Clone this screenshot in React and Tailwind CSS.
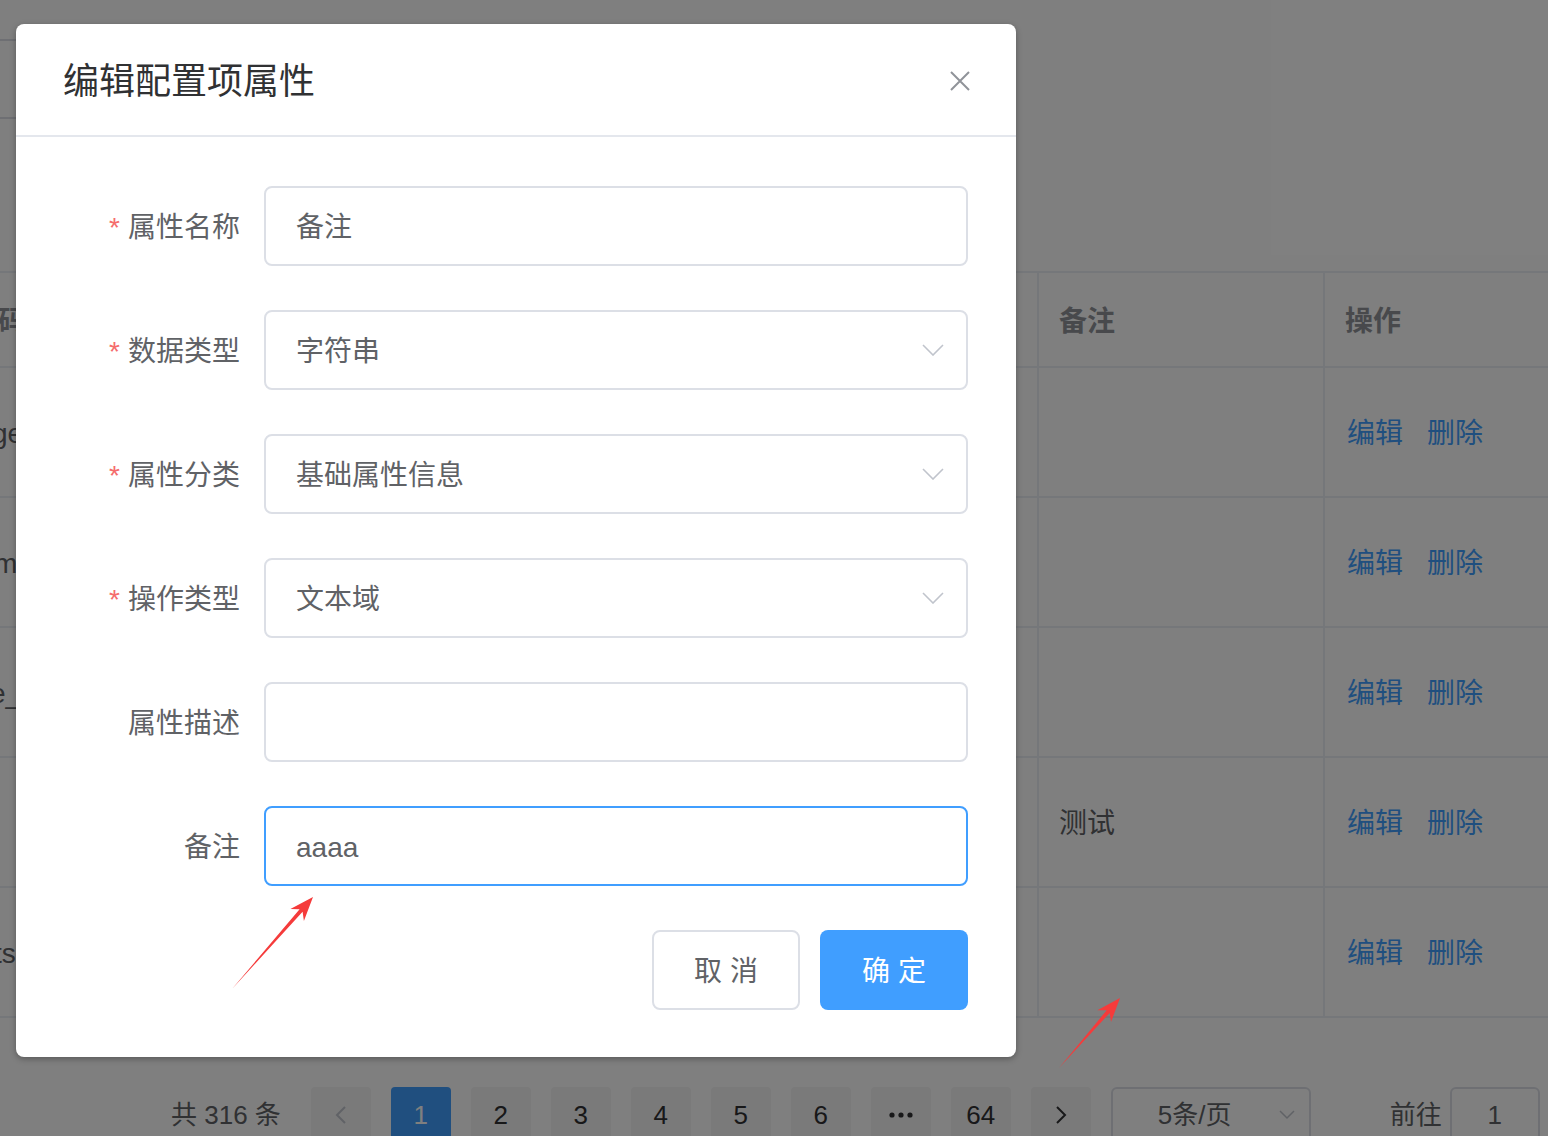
import React from "react";

const rows = [
  { left: "ge", leftShift: "-ml-[8px]", remark: "" },
  { left: "m", leftShift: "-ml-[6px]", remark: "" },
  { left: "e_", leftShift: "-ml-[10px]", remark: "" },
  { left: "", leftShift: "", remark: "测试" },
  { left: "ts", leftShift: "-ml-[6px]", remark: "" },
];

const fields = [
  { label: "属性名称", value: "备注", required: true, kind: "input" },
  { label: "数据类型", value: "字符串", required: true, kind: "select" },
  { label: "属性分类", value: "基础属性信息", required: true, kind: "select" },
  { label: "操作类型", value: "文本域", required: true, kind: "select" },
  { label: "属性描述", value: "", required: false, kind: "input" },
  { label: "备注", value: "aaaa", required: false, kind: "focus" },
];

const pages = ["1", "2", "3", "4", "5", "6", "more", "64"];

const ChevronDown = () => (
  <svg width="22" height="12" viewBox="0 0 22 12">
    <path d="M1 1 L11 11 L21 1" fill="none" stroke="#c0c4cc" strokeWidth="1.6" />
  </svg>
);

const Chevron = ({ dir, color }) => (
  <svg width="12" height="18" viewBox="0 0 12 18">
    <path
      d={dir === "left" ? "M10 1 L2 9 L10 17" : "M2 1 L10 9 L2 17"}
      fill="none"
      stroke={color}
      strokeWidth="2"
    />
  </svg>
);

const Background = () => (
  <div className="flex flex-col">
    <div className="-ml-[10px] mt-[39px] h-[80px] w-[600px] rounded-[8px] border-2 border-[#dcdfe6]" />

    <div className="mt-[152px] border-t-2 border-[#ebeef5]">
      <div className="grid h-[95px] grid-cols-[1039px_286px_1fr] border-b-2 border-[#ebeef5] text-[28px] font-bold text-[#909399]">
        <div className="flex items-center overflow-hidden border-r-2 border-[#ebeef5] pt-[4px]">
          <span className="-ml-[30px] whitespace-nowrap">编码</span>
        </div>
        <div className="flex items-center border-r-2 border-[#ebeef5] pl-[20px] pt-[4px]">备注</div>
        <div className="flex items-center pl-[20px] pt-[4px]">操作</div>
      </div>
      {rows.map((row, i) => (
        <div
          key={i}
          className="grid h-[130px] grid-cols-[1039px_286px_1fr] border-b-2 border-[#ebeef5] text-[28px] text-[#606266]"
        >
          <div className="flex items-center overflow-hidden border-r-2 border-[#ebeef5] pt-[4px]">
            <span className={`whitespace-nowrap ${row.leftShift}`}>{row.left}</span>
          </div>
          <div className="flex items-center border-r-2 border-[#ebeef5] pl-[20px] pt-[4px]">{row.remark}</div>
          <div className="flex items-center gap-[24px] pl-[22px] pt-[4px] text-[#409eff]">
            <span>编辑</span>
            <span>删除</span>
          </div>
        </div>
      ))}
    </div>

    <div className="mt-[69px] flex h-[56px] items-center pl-[171px] text-[26px] text-[#606266]">
      <span className="mr-[30px] whitespace-nowrap">共 316 条</span>
      <div className="mr-[20px] flex h-[56px] w-[60px] items-center justify-center rounded-[4px] bg-[#f4f4f5]">
        <Chevron dir="left" color="#c0c4cc" />
      </div>
      {pages.map((p) => (
        <div
          key={p}
          className={`mr-[20px] flex h-[56px] w-[60px] items-center justify-center rounded-[4px] ${
            p === "1" ? "bg-[#409eff] text-white" : "bg-[#f4f4f5] text-[#303133]"
          }`}
        >
          {p === "more" ? (
            <svg width="24" height="6" viewBox="0 0 24 6">
              <circle cx="3" cy="3" r="2.6" fill="#303133" />
              <circle cx="12" cy="3" r="2.6" fill="#303133" />
              <circle cx="21" cy="3" r="2.6" fill="#303133" />
            </svg>
          ) : (
            p
          )}
        </div>
      ))}
      <div className="mr-[20px] flex h-[56px] w-[60px] items-center justify-center rounded-[4px] bg-[#f4f4f5]">
        <Chevron dir="right" color="#303133" />
      </div>
      <div className="flex h-[56px] w-[200px] items-center rounded-[6px] border-2 border-[#dcdfe6] pl-[45px] pr-[14px]">
        <span className="flex-1 whitespace-nowrap">5条/页</span>
        <svg width="16" height="10" viewBox="0 0 16 10">
          <path d="M1 1 L8 8 L15 1" fill="none" stroke="#c0c4cc" strokeWidth="1.5" />
        </svg>
      </div>
      <span className="ml-[79px] whitespace-nowrap">前往</span>
      <div className="ml-[8px] flex h-[56px] w-[90px] items-center justify-center rounded-[6px] border-2 border-[#dcdfe6]">
        1
      </div>
    </div>
  </div>
);

const Field = ({ field }) => (
  <div className="mb-[44px] flex h-[80px] items-center">
    <div className="flex w-[248px] items-center justify-end pr-[24px] pt-[4px] text-[28px] text-[#606266]">
      {field.required ? <span className="mr-[8px] text-[#f56c6c]">*</span> : null}
      <span className="whitespace-nowrap">{field.label}</span>
    </div>
    <div
      className={`flex h-[80px] w-[704px] items-center justify-between rounded-[8px] border-2 pl-[30px] pr-[22px] text-[28px] text-[#606266] ${
        field.kind === "focus" ? "border-[#409eff]" : "border-[#dcdfe6]"
      }`}
    >
      <span className="whitespace-nowrap pt-[4px]">{field.value}</span>
      {field.kind === "select" ? <ChevronDown /> : null}
    </div>
  </div>
);

const Dialog = () => (
  <div className="w-[1000px] rounded-[8px] bg-white shadow-[0_2px_6px_rgba(0,0,0,0.3)]">
    <div className="flex h-[113px] items-center justify-between border-b-2 border-[#e4e7ed] pl-[47px] pr-[46px]">
      <h2 className="pt-[4px] text-[36px] leading-[48px] text-[#303133]">编辑配置项属性</h2>
      <svg width="20" height="20" viewBox="0 0 20 20" className="mt-[2px]">
        <path d="M1 1 L19 19 M19 1 L1 19" stroke="#909399" strokeWidth="2" />
      </svg>
    </div>

    <div className="pt-[49px]">
      {fields.map((f) => (
        <Field key={f.label} field={f} />
      ))}
    </div>

    <div className="flex justify-end gap-[20px] pb-[47px] pr-[48px]">
      <button
        type="button"
        className="flex h-[80px] w-[148px] items-center justify-center rounded-[8px] border-2 border-[#dcdfe6] bg-white pt-[3px] text-[28px] text-[#606266]"
      >
        取 消
      </button>
      <button
        type="button"
        className="flex h-[80px] w-[148px] items-center justify-center rounded-[8px] bg-[#409eff] pt-[3px] text-[28px] text-white"
      >
        确 定
      </button>
    </div>
  </div>
);

export default function App() {
  return (
    <div className="relative h-[1136px] w-full overflow-hidden bg-white font-['Liberation_Sans','Noto_Sans_CJK_SC',sans-serif]">
      <Background />

      {/* modal mask */}
      <div className="absolute inset-0 bg-black/50" />

      <div className="absolute inset-0 pl-[16px] pt-[24px]">
        <Dialog />
      </div>

      {/* red annotation arrows */}
      <svg className="pointer-events-none absolute inset-0" width="1548" height="1136">
        <polygon
          points="232,989 299.6,909.2 290.4,909.1 313,897 303.9,920.9 302.6,911.8"
          fill="#f53b3b"
        />
        <polygon
          points="1059,1068 1106.7,1010.3 1097.4,1010.2 1120,998 1111,1022 1109.7,1012.9"
          fill="#f53b3b"
        />
      </svg>
    </div>
  );
}
